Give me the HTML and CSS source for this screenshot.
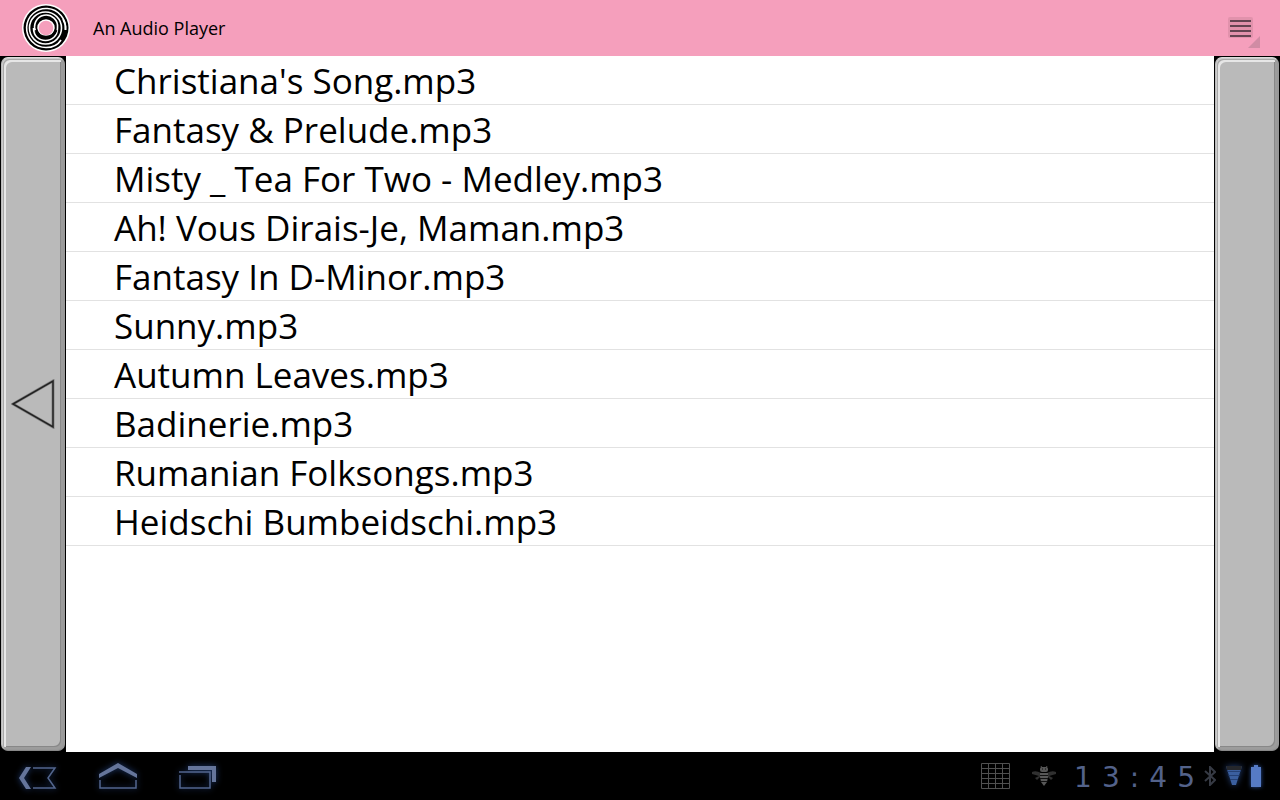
FILE: index.html
```html
<!DOCTYPE html>
<html lang="en">
<head>
<meta charset="utf-8">
<meta name="viewport" content="width=device-width, initial-scale=1">
<title>An Audio Player</title>
<link rel="stylesheet" href="styles.css">
</head>
<body>
<header class="action-bar">
  <svg class="logo" viewBox="0 0 48 48" aria-hidden="true">
    <circle cx="24" cy="24" r="24" fill="#fff"/>
    <circle cx="24" cy="24" r="22.500" fill="#000"/>
    <g fill="none" stroke="#fff" stroke-width="1.600">
      <path d="M43.500 26A19.500 19.500 0 1 0 24 43.500C31 43.500 36 41 39 36"/>
      <path d="M43.500 26A19.500 19.500 0 0 0 41 15"/>
      <circle cx="23.500" cy="24" r="16"/>
      <path d="M14 28A11.500 11.500 0 1 1 35.500 24C35.500 32 30 36.500 23.500 36.500C17 36.500 11.500 32 11.500 24"/>
    </g>
    <circle cx="24" cy="24" r="8" fill="#f59fbc" stroke="#fff" stroke-width="1.500"/>
    <path d="M14 26A10.500 10.500 0 0 0 34 26" fill="none" stroke="#000" stroke-width="3"/>
  </svg>
  <h1 class="title">An Audio Player</h1>
  <button class="menu" type="button" aria-label="Menu">
    <svg viewBox="0 0 40 40" aria-hidden="true">
      <rect x="8" y="7" width="25" height="21" rx="2" fill="#c98299" opacity=".45"/>
      <path d="M10 11h21M10 16h21M10 21h21M10 26h21" stroke="#634451" stroke-width="2"/>
      <path d="M40 26v12H28z" fill="#d08ca4"/>
    </svg>
  </button>
</header>
<main class="player">
  <div class="side"><button class="bevel" type="button" aria-label="Back">
    <svg class="arrow" viewBox="0 0 44 50" aria-hidden="true">
      <path d="M2 25L42 2V48z" fill="none" stroke="#888" stroke-width="3"/>
      <path d="M2 25L42 2V48z" fill="none" stroke="#222" stroke-width="1.500"/>
    </svg>
  </button></div>
  <ul class="songs">
    <li><a href="#">Christiana's Song.mp3</a></li>
    <li><a href="#">Fantasy &amp; Prelude.mp3</a></li>
    <li><a href="#">Misty _ Tea For Two - Medley.mp3</a></li>
    <li><a href="#">Ah! Vous Dirais-Je, Maman.mp3</a></li>
    <li><a href="#">Fantasy In D-Minor.mp3</a></li>
    <li><a href="#">Sunny.mp3</a></li>
    <li><a href="#">Autumn Leaves.mp3</a></li>
    <li><a href="#">Badinerie.mp3</a></li>
    <li><a href="#">Rumanian Folksongs.mp3</a></li>
    <li><a href="#">Heidschi Bumbeidschi.mp3</a></li>
  </ul>
  <div class="side"><button class="bevel" type="button" aria-label="Forward"></button></div>
</main>
<footer class="system-bar">
  <nav class="nav">
    <button type="button" aria-label="System back">
      <svg viewBox="0 0 60 48" aria-hidden="true">
        <path d="M9 26L16 15H21L14 26L21 37H16z" fill="#65759b"/>
        <path d="M23 16H45L38 26L45 36H23" fill="none" stroke="#53668e" stroke-width="1.500"/>
      </svg>
    </button>
    <button type="button" aria-label="Home">
      <svg viewBox="0 0 60 48" aria-hidden="true">
        <path d="M9 22L28 11L47 22V26L28 16L9 26z" fill="#65759b"/>
        <path d="M10 28V36H46V28" fill="none" stroke="#53668e" stroke-width="1.500"/>
      </svg>
    </button>
    <button type="button" aria-label="Recent apps">
      <svg viewBox="0 0 60 48" aria-hidden="true">
        <path d="M18 14H46V30H42V18H18z" fill="#65759b"/>
        <path d="M9 20H40V36H10V23" fill="none" stroke="#53668e" stroke-width="1.500"/>
      </svg>
    </button>
  </nav>
  <div class="status">
    <svg class="grid" viewBox="0 0 29 26" aria-hidden="true">
      <path d="M.5.500H28.500V25.500H.5zM7.500 0V26M14.500 0V26M21.500 0V26M0 5.500H29M0 10.500H29M0 15.500H29M0 20.500H29" fill="none" stroke="#505050"/>
    </svg>
    <svg class="bee" viewBox="0 0 24 22" aria-hidden="true">
      <path d="M0 7Q4 5 9 8L15 8Q20 5 24 7V9L17 11L21 13L19 15L15 11H9L5 15L3 13L7 11L0 9z" fill="#303030"/>
      <path d="M9 1L10 3M15 1L14 3" stroke="#555"/>
      <rect x="8" y="2" width="8" height="5" rx="2" fill="#555"/>
      <path d="M8 8H16V12L15 17L12 21L9 17L8 12z" fill="#585858"/>
      <path d="M8 10.500H16M8 13.500H16M9 16.500H15" stroke="#111"/>
      <path d="M10 4h1M13 4h1" stroke="#111"/>
    </svg>
    <time class="clock" datetime="13:45"><span>1</span><span>3</span><span>:</span><span>4</span><span>5</span></time>
    <svg class="bluetooth" viewBox="0 0 12 20" aria-hidden="true">
      <path d="M1 5L11 14L6 19V1L11 6L1 15" fill="none" stroke="#363a44" stroke-width="2"/>
    </svg>
    <svg class="wifi" viewBox="0 0 16 20" aria-hidden="true">
      <path d="M0 0H16L10 19H6z" fill="#3b5f9f"/>
      <path d="M0 0H16L15 4H1z" fill="#25272c"/>
      <path d="M1 5.500H15M2 9.500H14M4 13.500H12" stroke="#1c3564" stroke-width=".7"/>
    </svg>
    <svg class="battery" viewBox="0 0 10 22" aria-hidden="true">
      <path d="M0 2H3V0H7V2H10V22H0z" fill="#567bc5"/>
    </svg>
  </div>
</footer>
</body>
</html>
```
FILE: styles.css
```css
* { box-sizing: border-box; }
body {
  margin: 0;
  min-height: 100vh;
  display: flex;
  flex-direction: column;
  background: #fff;
  color: #000;
  font-family: "Open Sans", "Noto Sans", sans-serif;
}
button { border: 0; padding: 0; background: none; }
svg { display: block; }
.action-bar {
  display: flex;
  align-items: center;
  height: 56px;
  padding: 0 20px 0 22px;
  background: #f59fbc;
}
.logo { width: 48px; height: 48px; }
.title { margin: 0 auto 0 23px; font-size: 18px; font-weight: 400; line-height: 24px; }
.menu { display: flex; align-items: flex-end; height: 56px; padding-bottom: 6px; }
.menu svg { width: 40px; height: 40px; }

.player { flex: 1; display: flex; }
.side { flex: none; display: flex; width: 66px; background: #000; }
.bevel {
  flex: 1;
  display: flex;
  align-items: center;
  justify-content: center;
  margin: 1px;
  border: 1px solid;
  border-color: #ddd #999 #888 #bbb;
  border-radius: 7px;
  background: #bababa;
  box-shadow: inset 1px 1px #ccc, inset -1px -1px #999,
    inset 2px 2px #a8a8a8, inset -3px -3px #9c9c9c,
    inset 4px 4px #e6e6e6, inset -4px -4px #888;
}
.arrow { width: 44px; height: 50px; }
.songs { flex: 1; min-width: 0; margin: 0; padding: 0; list-style: none; }
.songs a {
  display: block;
  padding: 2px 0 0 48px;
  border-bottom: 1px solid #e2e2e2;
  color: #000;
  font-size: 35px;
  line-height: 46px;
  text-decoration: none;
}
.system-bar {
  display: flex;
  align-items: center;
  justify-content: space-between;
  height: 48px;
  padding: 0 19px 0 10px;
  background: #000;
}
.nav { display: flex; gap: 20px; }
.nav svg { width: 60px; height: 48px; filter: drop-shadow(0 0 3px #203c72); }
.status { display: flex; align-items: center; }
.grid { width: 29px; height: 26px; margin-right: 22px; }
.bee { width: 24px; height: 22px; margin-right: 18px; }
.clock {
  display: flex;
  justify-content: space-between;
  width: 121px;
  margin-right: 9px;
  padding-top: 3px;
  color: #53628a;
  font-family: "DejaVu Sans", sans-serif;
  font-size: 28px;
  line-height: 45px;
}
.bluetooth { width: 12px; height: 20px; margin-right: 10px; }
.wifi { width: 16px; height: 20px; margin-right: 9px; filter: drop-shadow(0 0 3px #203c72); }
.battery { width: 10px; height: 22px; filter: drop-shadow(0 0 2px #29509a); }
```
